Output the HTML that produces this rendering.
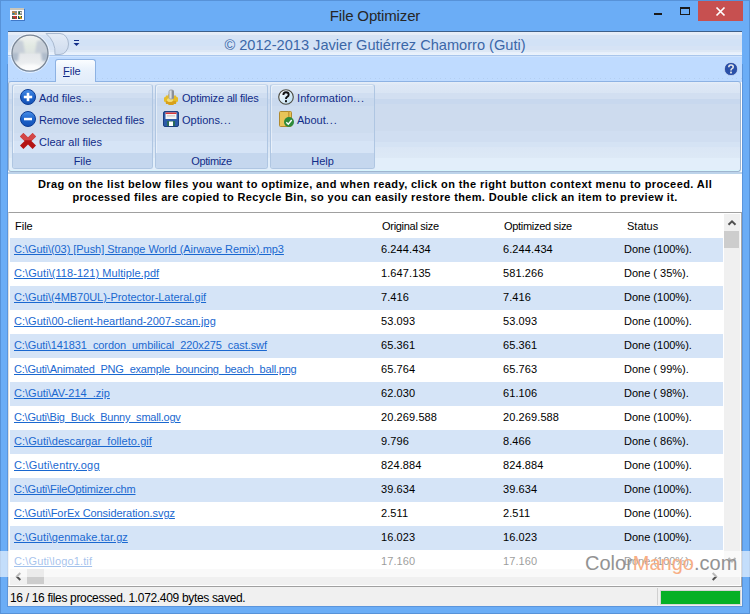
<!DOCTYPE html>
<html><head><meta charset="utf-8">
<style>
*{box-sizing:border-box}
html,body{margin:0;padding:0}
body{width:750px;height:614px;position:relative;overflow:hidden;background:#6badf6;font-family:"Liberation Sans",sans-serif;font-size:11px;color:#000}
div,svg{position:absolute}
.frame{left:0;top:0;width:750px;height:614px;border:1px solid #5792d8;}
.ttl{left:0;top:7px;width:750px;text-align:center;font-size:15px;color:#262626;line-height:18px;letter-spacing:-0.15px}
.client{left:8px;top:31px;width:734px;height:575px;background:#fff}
.qat{left:8px;top:31px;width:734px;height:25px;border-top:1px solid #3d5f8a;background:linear-gradient(#e8eef8 0px,#e4ecf7 3px,#d6e3f5 3px,#d6e3f5 7px,#d2e2f6 7px,#d2e2f6 14px,#d6e3f5 14px,#d6e3f5 18px,#dde8f5 18px,#dde8f5 20px,#e6effb 20px,#ebf3fc 23px)}
.qatl1{left:8px;top:56px;width:734px;height:1px;background:#d0e4fd}
.qatl2{left:8px;top:55px;width:734px;height:1px;background:#a9c6ec}
.cap{left:8px;top:37px;width:734px;text-align:center;font-size:14.6px;color:#3b67a8;line-height:17px}
.tabs{left:8px;top:57px;width:734px;height:25px;background:#bfdbff}
.dots{left:8px;top:78px;width:734px;height:1px;background:repeating-linear-gradient(90deg,#b4cff2 0 1px,#bfdbff 1px 4.7px)}
.tab{left:55px;top:59px;width:41px;height:24px;border:1px solid #8db2e3;border-bottom:none;border-radius:3px 3px 0 0;background:linear-gradient(#fbfdff,#eaf2fc 40%,#e1ecfa)}
.tabtxt{left:63px;top:65px;font-size:11px;color:#112c88;line-height:13px}
.panel{left:8px;top:81px;width:733px;height:91px;border:1px solid #9fb5cf;border-top-color:#8db2e3;border-radius:3px;background:linear-gradient(#e6eef8 0px,#dde7f5 3px,#d9e5f4 11px,#d2dff1 11px,#d2dff1 17px,#c8d8ee 17px,#c8d8ee 22px,#cddbee 22px,#cddbee 49px,#d0def1 49px,#d0def1 60px,#d5e3f4 60px,#d5e3f4 65px,#dae6f5 65px,#dde9f6 76px,#e2eefa 76px,#e2eefa 88px,#d6f4fd 88px)}
.panelbot{left:8px;top:172px;width:734px;height:2px;background:#bcd3ea}
.grp{top:84px;height:85px;border:1px solid #afc6e2;border-top-color:#c6d7ec;border-radius:3px;box-shadow:inset 1px 1px 0 rgba(255,255,255,0.45);background:linear-gradient(#d9e5f4 0px,#d9e5f4 8px,#d0def1 8px,#d0def1 13px,#c9d9ee 13px,#c9d9ee 21px,#cddcef 21px,#cddcef 48px,#d1dff2 48px,#d1dff2 56px,#d6e4f6 56px)}
.glab{top:153px;height:15px;border-radius:0 0 2px 2px;background:#c5d7ee;text-align:center;color:#112c88;line-height:15px;font-size:11px;padding-top:1px}
.btxt{color:#112c88;font-size:11px;line-height:13px}
.instr{left:8px;top:178px;width:734px;text-align:center;font-weight:bold;font-size:11px;letter-spacing:0.41px;line-height:13px;color:#000}
.list{left:8px;top:212px;width:734px;height:374px;border-top:1px solid #a0a0a0;border-left:1px solid #e0e0e0;border-right:1px solid #a8a8a8;background:#fff}
.hdr{top:220px;line-height:13px;font-size:11px;color:#000}
.row{left:10px;width:713px;height:24px;background:#fff}
.row.alt{background:#d5e4f7}
.lnk{left:14px;line-height:22px;color:#1a68d0;text-decoration:underline;font-size:11px;white-space:pre}
.cell{line-height:22px;font-size:11px;white-space:pre;color:#000}
.num{letter-spacing:0.1px}
.vs{left:724px;top:214px;width:16px;height:355px;background:#f0f0f0}
.hs{left:10px;top:569px;width:714px;height:16px;background:#f0f0f0}
.corner{left:724px;top:569px;width:16px;height:16px;background:#f0f0f0}
.status{left:8px;top:586px;width:734px;height:20px;border-top:1px solid #a0a0a0;background:#f0f0f0}
.stxt{left:10px;top:591px;font-size:12px;line-height:14px;color:#000;letter-spacing:-0.33px}
.wm{left:0;top:551px;width:750px;height:26px;background:rgba(255,255,255,0.6)}
.wmt{left:585px;top:550px;font-size:20px;line-height:26px;color:#939393}
</style></head><body>
<div class="frame"></div>
<!-- title icon -->
<div style="left:10px;top:8px;width:14px;height:12px;background:#fff;border-top:2px solid #cac6ba;box-shadow:1px 1px 0 #3f78c8">
  <svg width="14" height="10" style="left:0;top:0">
    <rect x="2" y="1" width="5" height="4" fill="#8a8a8a"/><rect x="2.5" y="1.5" width="2" height="1.5" fill="#e08a20"/><rect x="4.5" y="3" width="2" height="1.5" fill="#e08a20"/><rect x="2.5" y="3" width="2" height="1.5" fill="#2a7a8a"/>
    <rect x="8" y="1" width="4" height="4" fill="#8a8a8a"/><rect x="8.5" y="1.5" width="2" height="2.5" fill="#1a6a3a"/><rect x="10" y="2" width="1.5" height="1.5" fill="#f0f0f0"/>
    <rect x="2" y="6" width="5" height="3" fill="#505a40"/><rect x="3" y="6" width="3" height="1.5" fill="#e03030"/><rect x="5" y="7.5" width="2" height="1.5" fill="#d03030"/>
    <rect x="8" y="6" width="4" height="3" fill="#204a50"/><rect x="9" y="6" width="2" height="1.5" fill="#f0e020"/><rect x="10" y="7.5" width="2" height="1.5" fill="#d09020"/>
  </svg>
</div>
<div class="ttl">File Optimizer</div>
<!-- window buttons -->
<div style="left:654px;top:13px;width:8px;height:2px;background:#1a1a1a"></div>
<div style="left:680px;top:7px;width:10px;height:8px;border:1px solid #1a1a1a;border-top-width:2px"></div>
<div style="left:698px;top:1px;width:45px;height:20px;background:#c75050">
  <svg width="45" height="20" style="left:0;top:0"><path d="M18.5 6.5 L26.5 14.5 M26.5 6.5 L18.5 14.5" stroke="#fff" stroke-width="1.7"/></svg>
</div>

<div class="client"></div>
<div style="left:7px;top:64px;width:1px;height:543px;background:#5b95dc"></div><div style="left:742px;top:64px;width:1px;height:543px;background:#5b95dc"></div><div style="left:7px;top:606px;width:736px;height:1px;background:#5b95dc"></div>
<div class="qat"></div>
<div class="qatl1"></div>
<div class="qatl2"></div>
<div class="cap">© 2012-2013 Javier Gutiérrez Chamorro (Guti)</div>
<div class="tabs"></div>
<div class="dots"></div>
<!-- QAT shape -->
<svg style="left:8px;top:31px" width="80" height="30">
  <defs><linearGradient id="qg" x1="0" y1="0" x2="0" y2="1"><stop offset="0" stop-color="#e3ebf6"/><stop offset="1" stop-color="#cfdcee"/></linearGradient></defs>
  <path d="M38 2.5 L52 2.5 A8.5 10.5 0 0 1 52 23.5 L47 23.5 A 25 25 0 0 0 38 2.5 Z" fill="url(#qg)" stroke="#a9b9cf" stroke-width="1"/>
  <rect x="66" y="9" width="5" height="1" fill="#112c88"/>
  <path d="M65.5 12 L71.5 12 L68.5 15 Z" fill="#112c88"/>
</svg>
<!-- orb -->
<svg style="left:10px;top:33px" width="41" height="41">
  <defs>
    <clipPath id="oc"><circle cx="20" cy="20.2" r="17.6"/></clipPath><filter id="ob" x="-20%" y="-20%" width="140%" height="140%"><feGaussianBlur stdDeviation="1.1"/></filter>
    <linearGradient id="og" x1="0" y1="0" x2="0" y2="1"><stop offset="0" stop-color="#f0f2f2"/><stop offset="0.3" stop-color="#e2e9e2"/><stop offset="0.5" stop-color="#dde3e2"/><stop offset="0.52" stop-color="#e4e7ea"/><stop offset="0.8" stop-color="#eceef0"/><stop offset="1" stop-color="#f8f9fa"/></linearGradient>
  </defs>
  <circle cx="20" cy="20.2" r="19.3" fill="none" stroke="#ffffff" stroke-opacity="0.55" stroke-width="1"/>
  <circle cx="20" cy="20.2" r="18" fill="url(#og)"/>
  <g clip-path="url(#oc)"><g filter="url(#ob)">
    <path d="M0 6 L13 8 L15 20 L0 20 Z" fill="#c2cad6" opacity="0.85"/>
    <path d="M40 6 L27 8 L25 20 L40 20 Z" fill="#c2cad6" opacity="0.85"/>
    <path d="M0 20 L9 20 L8 28 L0 28 Z" fill="#a6b4c6" opacity="0.85"/>
    <path d="M40 20 L31 20 L32 28 L40 28 Z" fill="#a6b4c6" opacity="0.85"/>
    <ellipse cx="20" cy="35" rx="12" ry="4" fill="#ffffff" opacity="0.7"/>
  </g></g>
  <circle cx="20" cy="20.2" r="18" fill="none" stroke="#7b8796" stroke-width="1.3"/>
</svg>
<!-- tab -->
<div class="tab"></div>
<div class="tabtxt"><u>F</u>ile</div>
<!-- ribbon panel -->
<div class="panelbot"></div>
<div class="panel"></div>
<div style="left:56px;top:81px;width:39px;height:2px;background:#e3edfa"></div>
<div class="grp" style="left:12px;width:141px"></div>
<div class="glab" style="left:13px;width:139px">File</div>
<div class="grp" style="left:155px;width:113px"></div>
<div class="glab" style="left:156px;width:111px;letter-spacing:-0.35px">Optimize</div>
<div class="grp" style="left:270px;width:105px"></div>
<div class="glab" style="left:271px;width:103px">Help</div>

<!-- ribbon buttons -->
<svg style="left:20px;top:89px" width="16" height="16">
  <defs><linearGradient id="bg1" x1="0" y1="0" x2="0" y2="1"><stop offset="0" stop-color="#4a90e8"/><stop offset="0.5" stop-color="#1c64cc"/><stop offset="1" stop-color="#1450b4"/></linearGradient></defs>
  <circle cx="8" cy="8" r="7.5" fill="url(#bg1)" stroke="#0c3c94" stroke-width="1"/>
  <rect x="3.8" y="6.7" width="8.4" height="2.6" fill="#fff"/><rect x="6.7" y="3.8" width="2.6" height="8.4" fill="#fff"/>
</svg>
<div class="btxt" style="left:39px;top:92px">Add files<span style="letter-spacing:0.9px">...</span></div>
<svg style="left:20px;top:111px" width="16" height="16">
  <circle cx="8" cy="8" r="7.5" fill="url(#bg1)" stroke="#0c3c94" stroke-width="1"/>
  <rect x="4" y="6.8" width="8" height="2.5" fill="#fff"/>
</svg>
<div class="btxt" style="left:39px;top:114px;letter-spacing:-0.12px">Remove selected files</div>
<svg style="left:20px;top:133px" width="17" height="17">
  <path d="M0 3.4 L3.4 0 L8 4.6 L12.6 0 L16 3.4 L11.4 8 L16 12.6 L12.6 16 L8 11.4 L3.4 16 L0 12.6 L4.6 8 Z" fill="#b41414"/>
  <path d="M0 3.4 L3.4 0 L8 4.6 L12.6 0 L16 3.4 L12.2 7.2 L3.8 7.2 Z" fill="#d85050" opacity="0.85"/>
</svg>
<div class="btxt" style="left:39px;top:136px">Clear all files</div>

<svg style="left:163px;top:89px" width="16" height="17">
  <path d="M3 6.5 L5 6.5 L5.5 5 L10.5 5 L11 6.5 L13 6.5 L13.5 8 L15 8.5 L15 12.5 L13.5 13 L13 15 L11 15 L10 16 L6 16 L5 15 L3 15 L2.5 13 L1 12.5 L1 8.5 L2.5 8 Z" fill="#e6bc28"/>
  <path d="M3 12 L13 12 L13 15 L11 15 L10 16 L6 16 L5 15 L3 15 Z" fill="#d49a18" opacity="0.8"/>
  <ellipse cx="7" cy="11" rx="3" ry="2" fill="#f8e68a" opacity="0.8"/>
  <rect x="5.5" y="0.5" width="5.5" height="10" rx="2.5" fill="#9ea2a8"/>
  <rect x="6.5" y="1.5" width="2" height="8" fill="#dcdee0"/>
  <rect x="9.5" y="1.5" width="1" height="8" fill="#7a7e84"/>
</svg>
<div class="btxt" style="left:182px;top:92px;letter-spacing:-0.2px">Optimize all files</div>
<svg style="left:163px;top:111px" width="16" height="16">
  <rect x="0.5" y="0.5" width="15" height="15" rx="1.5" fill="#2c5aa8" stroke="#1c3f80" stroke-width="1"/>
  <rect x="2.5" y="1.5" width="11" height="6.5" fill="#f4f4f4"/>
  <rect x="2.5" y="1.5" width="11" height="1.5" fill="#d83838"/>
  <rect x="4" y="4.5" width="8" height="0.8" fill="#b0b0b0"/>
  <rect x="4" y="10" width="8" height="5" fill="#2a6a5a"/>
  <rect x="6" y="10.5" width="4" height="4.5" fill="#ffffff"/>
</svg>
<div class="btxt" style="left:182px;top:114px">Options<span style="letter-spacing:0.9px">...</span></div>

<svg style="left:278px;top:89px" width="16" height="16">
  <defs><linearGradient id="ig" x1="0" y1="0" x2="1" y2="1"><stop offset="0" stop-color="#ffffff"/><stop offset="1" stop-color="#b8dcf0"/></linearGradient></defs>
  <circle cx="8" cy="8" r="7.3" fill="url(#ig)" stroke="#4a4a40" stroke-width="1.1"/>
  <path d="M5.4 6 Q5.4 3.3 8 3.3 Q10.7 3.3 10.7 5.8 Q10.7 7.3 8.9 8.2 Q8 8.7 8 10" stroke="#111" stroke-width="1.9" fill="none"/>
  <rect x="7" y="11.2" width="2" height="2" fill="#111"/>
</svg>
<div class="btxt" style="left:297px;top:92px;letter-spacing:0.1px">Information<span style="letter-spacing:0.9px">...</span></div>
<svg style="left:278px;top:111px" width="16" height="16">
  <rect x="1.5" y="0.5" width="12" height="15" rx="1" fill="#e8c458" stroke="#b08a30" stroke-width="1"/>
  <rect x="10" y="0.5" width="1.5" height="15" fill="#c89a38"/>
  <circle cx="11" cy="11" r="5" fill="#2e8a3a"/>
  <path d="M8.3 11.2 L10.3 13.2 L13.7 9" stroke="#fff" stroke-width="1.4" fill="none"/>
</svg>
<div class="btxt" style="left:297px;top:114px">About<span style="letter-spacing:0.9px">...</span></div>

<!-- help icon right -->
<svg style="left:724px;top:62px" width="14" height="14">
  <circle cx="7" cy="7" r="6.6" fill="#2a50a8" stroke="#e6eefa" stroke-width="0.6"/>
  <path d="M4.8 5.2 Q4.8 3 7 3 Q9.2 3 9.2 5 Q9.2 6.2 7.7 6.9 Q7 7.3 7 8.6" stroke="#e8e8e8" stroke-width="1.6" fill="none"/>
  <rect x="6.1" y="9.6" width="1.8" height="1.8" fill="#e8e8e8"/>
</svg>

<div class="instr">Drag on the list below files you want to optimize, and when ready, click on the right button context menu to proceed. All<br><span style="letter-spacing:0.35px">processed files are copied to Recycle Bin, so you can easily restore them. Double click an item to preview it.</span></div>

<div class="list"></div>
<div class="hdr" style="left:15px">File</div>
<div class="hdr" style="left:382px;letter-spacing:-0.29px">Original size</div>
<div class="hdr" style="left:504px;letter-spacing:-0.3px">Optimized size</div>
<div class="hdr" style="left:627px">Status</div>
<div class="row alt" style="top:238px"></div><div class="lnk" style="top:238px;letter-spacing:-0.048px">C:\Guti\(03) [Push] Strange World (Airwave Remix).mp3</div><div class="cell num" style="top:238px;left:381px">6.244.434</div><div class="cell num" style="top:238px;left:503px">6.244.434</div><div class="cell" style="top:238px;left:624px">Done&nbsp;(100%).</div>
<div class="row" style="top:262px"></div><div class="lnk" style="top:262px;letter-spacing:0.058px">C:\Guti\(118-121) Multiple.pdf</div><div class="cell num" style="top:262px;left:381px">1.647.135</div><div class="cell num" style="top:262px;left:503px">581.266</div><div class="cell" style="top:262px;left:624px">Done&nbsp;(&nbsp;35%).</div>
<div class="row alt" style="top:286px"></div><div class="lnk" style="top:286px;letter-spacing:-0.043px">C:\Guti\(4MB70UL)-Protector-Lateral.gif</div><div class="cell num" style="top:286px;left:381px">7.416</div><div class="cell num" style="top:286px;left:503px">7.416</div><div class="cell" style="top:286px;left:624px">Done&nbsp;(100%).</div>
<div class="row" style="top:310px"></div><div class="lnk" style="top:310px;letter-spacing:0.016px">C:\Guti\00-client-heartland-2007-scan.jpg</div><div class="cell num" style="top:310px;left:381px">53.093</div><div class="cell num" style="top:310px;left:503px">53.093</div><div class="cell" style="top:310px;left:624px">Done&nbsp;(100%).</div>
<div class="row alt" style="top:334px"></div><div class="lnk" style="top:334px;letter-spacing:-0.082px">C:\Guti\141831_cordon_umbilical_220x275_cast.swf</div><div class="cell num" style="top:334px;left:381px">65.361</div><div class="cell num" style="top:334px;left:503px">65.361</div><div class="cell" style="top:334px;left:624px">Done&nbsp;(100%).</div>
<div class="row" style="top:358px"></div><div class="lnk" style="top:358px;letter-spacing:-0.2px">C:\Guti\Animated_PNG_example_bouncing_beach_ball.png</div><div class="cell num" style="top:358px;left:381px">65.764</div><div class="cell num" style="top:358px;left:503px">65.763</div><div class="cell" style="top:358px;left:624px">Done&nbsp;(&nbsp;99%).</div>
<div class="row alt" style="top:382px"></div><div class="lnk" style="top:382px;letter-spacing:0.006px">C:\Guti\AV-214_.zip</div><div class="cell num" style="top:382px;left:381px">62.030</div><div class="cell num" style="top:382px;left:503px">61.106</div><div class="cell" style="top:382px;left:624px">Done&nbsp;(&nbsp;98%).</div>
<div class="row" style="top:406px"></div><div class="lnk" style="top:406px;letter-spacing:-0.22px">C:\Guti\Big_Buck_Bunny_small.ogv</div><div class="cell num" style="top:406px;left:381px">20.269.588</div><div class="cell num" style="top:406px;left:503px">20.269.588</div><div class="cell" style="top:406px;left:624px">Done&nbsp;(100%).</div>
<div class="row alt" style="top:430px"></div><div class="lnk" style="top:430px;letter-spacing:0.054px">C:\Guti\descargar_folleto.gif</div><div class="cell num" style="top:430px;left:381px">9.796</div><div class="cell num" style="top:430px;left:503px">8.466</div><div class="cell" style="top:430px;left:624px">Done&nbsp;(&nbsp;86%).</div>
<div class="row" style="top:454px"></div><div class="lnk" style="top:454px;letter-spacing:0.198px">C:\Guti\entry.ogg</div><div class="cell num" style="top:454px;left:381px">824.884</div><div class="cell num" style="top:454px;left:503px">824.884</div><div class="cell" style="top:454px;left:624px">Done&nbsp;(100%).</div>
<div class="row alt" style="top:478px"></div><div class="lnk" style="top:478px;letter-spacing:-0.152px">C:\Guti\FileOptimizer.chm</div><div class="cell num" style="top:478px;left:381px">39.634</div><div class="cell num" style="top:478px;left:503px">39.634</div><div class="cell" style="top:478px;left:624px">Done&nbsp;(100%).</div>
<div class="row" style="top:502px"></div><div class="lnk" style="top:502px;letter-spacing:-0.073px">C:\Guti\ForEx Consideration.svgz</div><div class="cell num" style="top:502px;left:381px">2.511</div><div class="cell num" style="top:502px;left:503px">2.511</div><div class="cell" style="top:502px;left:624px">Done&nbsp;(100%).</div>
<div class="row alt" style="top:526px"></div><div class="lnk" style="top:526px;letter-spacing:0.064px">C:\Guti\genmake.tar.gz</div><div class="cell num" style="top:526px;left:381px">16.023</div><div class="cell num" style="top:526px;left:503px">16.023</div><div class="cell" style="top:526px;left:624px">Done&nbsp;(100%).</div>
<div class="row" style="top:550px"></div><div class="lnk" style="top:550px;letter-spacing:0.135px">C:\Guti\logo1.tif</div><div class="cell num" style="top:550px;left:381px">17.160</div><div class="cell num" style="top:550px;left:503px">17.160</div><div class="cell" style="top:550px;left:624px">Done&nbsp;(100%).</div>
<div class="vs"></div>
<svg style="left:724px;top:214px" width="17" height="17"><path d="M4.5 10.8 L8 7.3 L11.5 10.8" stroke="#505050" stroke-width="2" fill="none"/></svg>
<div style="left:724px;top:231px;width:15px;height:17px;background:#cdcdcd"></div>
<svg style="left:724px;top:551px" width="17" height="17"><path d="M4.5 7 L8 10.5 L11.5 7" stroke="#505050" stroke-width="2" fill="none"/></svg>
<div class="hs"></div>
<svg style="left:10px;top:568px" width="17" height="17"><path d="M10.3 5 L6.8 8.5 L10.3 12" stroke="#505050" stroke-width="2" fill="none"/></svg>
<div style="left:27px;top:569px;width:17px;height:15px;background:#cdcdcd"></div>
<svg style="left:706px;top:568px" width="17" height="17"><path d="M6.7 5 L10.2 8.5 L6.7 12" stroke="#505050" stroke-width="2" fill="none"/></svg>
<div class="corner"></div>
<div class="status"></div>
<div class="stxt">16 / 16 files processed. 1.072.409 bytes saved.</div>
<div style="left:657px;top:588px;width:1px;height:17px;background:#d0d0d0"></div>
<div style="left:660px;top:590px;width:81px;height:15px;border:1px solid #d6d6d6;background:#06b025"></div>

<div class="wm"></div>
<div class="wmt"><span>Color</span><span style="color:#f7ae84">Mango</span><span>.com</span></div>
</body></html>
